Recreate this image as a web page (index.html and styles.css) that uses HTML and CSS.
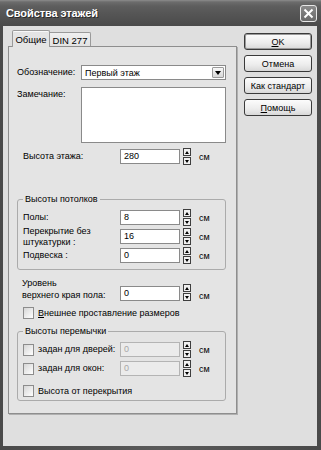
FILE: index.html
```html
<!DOCTYPE html>
<html lang="ru">
<head>
<meta charset="utf-8">
<title>Свойства этажей</title>
<link rel="stylesheet" href="styles.css">
</head>
<body>
<div class="window">
  <div class="titlebar">
    <span class="title">Свойства этажей</span>
    <span class="close">
      <svg width="11" height="11" viewBox="0 0 11 11"><path d="M1.5 1.5 L9.5 9.5 M9.5 1.5 L1.5 9.5" stroke="#fff" stroke-width="2" fill="none"/></svg>
    </span>
  </div>
  <div class="client">
    <div class="tabarea">
      <div class="tabs">
        <div class="tab active">Общие</div>
        <div class="tab">DIN 277</div>
      </div>
      <div class="panel">
        <div class="row row-select">
          <span class="lbl lbl-short">Обозначение:</span>
          <div class="combo"><span class="combo-text">Первый этаж</span><span class="combo-btn"><i class="tri-down"></i></span></div>
        </div>
        <div class="row row-note">
          <span class="lbl lbl-short lbl-note">Замечание:</span>
          <div class="memo"></div>
        </div>
        <div class="row num-row row-height">
          <span class="lbl lbl-num">Высота этажа:</span>
          <div class="edit">280</div>
          <div class="spin"><span class="spin-btn"><i class="tri-up"></i></span><span class="spin-btn"><i class="tri-down"></i></span></div>
          <span class="unit">см</span>
        </div>

        <fieldset class="group group-ceil">
          <legend>Высоты потолков</legend>
          <div class="row num-row">
            <span class="lbl lbl-num">Полы:</span>
            <div class="edit">8</div>
            <div class="spin"><span class="spin-btn"><i class="tri-up"></i></span><span class="spin-btn"><i class="tri-down"></i></span></div>
            <span class="unit">см</span>
          </div>
          <div class="row num-row">
            <span class="lbl lbl-num lbl-two">Перекрытие без<br>штукатурки :</span>
            <div class="edit">16</div>
            <div class="spin"><span class="spin-btn"><i class="tri-up"></i></span><span class="spin-btn"><i class="tri-down"></i></span></div>
            <span class="unit">см</span>
          </div>
          <div class="row num-row">
            <span class="lbl lbl-num">Подвеска :</span>
            <div class="edit">0</div>
            <div class="spin"><span class="spin-btn"><i class="tri-up"></i></span><span class="spin-btn"><i class="tri-down"></i></span></div>
            <span class="unit">см</span>
          </div>
        </fieldset>

        <div class="row num-row row-level">
          <span class="lbl lbl-num lbl-two2">Уровень<br>верхнего края пола:</span>
          <div class="edit">0</div>
          <div class="spin"><span class="spin-btn"><i class="tri-up"></i></span><span class="spin-btn"><i class="tri-down"></i></span></div>
          <span class="unit">см</span>
        </div>

        <div class="row check-row row-ext">
          <span class="check"></span>
          <span class="check-lbl"><u>В</u>нешнее проставление размеров</span>
        </div>

        <fieldset class="group group-lintel">
          <legend>Высоты перемычки</legend>
          <div class="row num-row">
            <span class="lbl lbl-check">
              <span class="check"></span>
              <span class="check-lbl">задан для дверей:</span>
            </span>
            <div class="edit disabled">0</div>
            <div class="spin"><span class="spin-btn"><i class="tri-up"></i></span><span class="spin-btn"><i class="tri-down"></i></span></div>
            <span class="unit">см</span>
          </div>
          <div class="row num-row">
            <span class="lbl lbl-check">
              <span class="check"></span>
              <span class="check-lbl">задан для окон:</span>
            </span>
            <div class="edit disabled">0</div>
            <div class="spin"><span class="spin-btn"><i class="tri-up"></i></span><span class="spin-btn"><i class="tri-down"></i></span></div>
            <span class="unit">см</span>
          </div>
          <div class="row check-row row-from">
            <span class="check"></span>
            <span class="check-lbl">Высота от перекрытия</span>
          </div>
        </fieldset>
      </div>
    </div>
    <div class="buttons">
      <div class="btn btn-default"><u>O</u>K</div>
      <div class="btn">Отмена</div>
      <div class="btn">Как стандарт</div>
      <div class="btn"><u>П</u>омощь</div>
    </div>
  </div>
</div>
</body>
</html>
```

FILE: styles.css
```css
* { box-sizing: border-box; }
html, body { margin: 0; padding: 0; }
body {
  width: 321px;
  height: 450px;
  overflow: hidden;
  font-family: "Liberation Sans", Arial, sans-serif;
  font-size: 9px;
  color: #000;
  background: #fff;
}

.window {
  width: 321px;
  height: 450px;
  display: flex;
  flex-direction: column;
  background: linear-gradient(90deg, #4a4a4a, #5a5a5a 50%, #4a4a4a);
}

.titlebar {
  height: 26px;
  flex: none;
  display: flex;
  align-items: center;
  justify-content: space-between;
  padding: 0 4px 0 6px;
  background: linear-gradient(180deg, #8c8c8c 0, #6c6c6c 2px, #5e5e5e 6px, #555 14px, #4e4e4e 22px, #4a4a4a 100%);
}
.title {
  color: #fff;
  font-weight: bold;
  font-size: 11px;
  letter-spacing: -0.1px;
  text-shadow: 1px 1px 0 #2a2a2a;
}
.close {
  width: 17px;
  height: 17px;
  display: flex;
  align-items: center;
  justify-content: center;
  border: 1px solid #e8e8e8;
  border-radius: 3px;
  background: linear-gradient(180deg, #8a8a8a, #6a6a6a);
}

.client {
  flex: 1;
  margin: 0 4px 4px 3px;
  background: #dfdfdf;
  display: flex;
  padding: 4px 0 0 5px;
}

.tabarea {
  width: 229px;
  display: flex;
  flex-direction: column;
}
.tabs {
  display: flex;
  align-items: flex-end;
  padding-left: 4px;
  height: 16px;
  position: relative;
  z-index: 1;
}
.tab {
  height: 14px;
  width: 41px;
  font-size: 9.5px;
  border: 1px solid #9a9a9a;
  border-bottom: none;
  border-left: none;
  border-radius: 0 2px 0 0;
  background: linear-gradient(180deg, #f0f0f0, #e2e2e2);
  display: flex;
  align-items: center;
  justify-content: center;
  padding-top: 1px;
}
.tab.active {
  height: 17px;
  width: 38px;
  margin-bottom: -1px;
  border-left: 1px solid #9a9a9a;
  border-top: 1px solid #9a9a9a;
  box-shadow: inset 0 1px 0 #f8f8f8;
  border-radius: 2px 2px 0 0;
  background: #e4e4e4;
  padding-top: 0;
}

.panel {
  width: 229px;
  height: 368px;
  border: 1px solid #8e8e8e;
  box-shadow: 1px 1px 0 #b0b0b0;
  background: #e4e4e4;
  padding: 18px 10px 0 8px;
  display: flex;
  flex-direction: column;
}

.row { display: flex; align-items: center; }
.lbl { flex: none; white-space: nowrap; line-height: 11px; }
.lbl-short { width: 64px; }

.row-select { height: 15px; }
.combo {
  width: 146px;
  height: 15px;
  border: 1px solid #8a8a8a;
  background: #fff;
  display: flex;
  align-items: center;
  justify-content: space-between;
  padding: 0 1px 0 3px;
}
.combo-btn {
  width: 12px;
  height: 11px;
  border: 1px solid #9a9a9a;
  border-radius: 1px;
  background: linear-gradient(180deg, #f8f8f8, #d8d8d8);
  display: flex;
  align-items: center;
  justify-content: center;
}

.row-note { margin-top: 7px; align-items: flex-start; }
.lbl-note { padding-top: 2px; }
.memo {
  width: 146px;
  height: 56px;
  border: 1px solid #8a8a8a;
  background: #fff;
}

.num-row { height: 17px; }
.lbl-num { width: 97px; }
.row-height { margin-top: 5px; padding-left: 6px; }
.edit {
  flex: none;
  width: 60px;
  height: 15px;
  border: 1px solid #8a8a8a;
  background: #fff;
  padding-left: 3px;
  line-height: 13px;
}
.edit.disabled { background: #ebebeb; color: #a8a8a8; border-color: #b4b4b4; }
.spin {
  flex: none;
  margin-left: 3px;
  width: 8px;
  height: 17px;
  display: flex;
  flex-direction: column;
  justify-content: space-between;
}
.spin-btn {
  height: 8px;
  border: 1px solid #3e3e3e;
  background: #f0f0f0;
  display: flex;
  align-items: center;
  justify-content: center;
}
.unit { margin-left: 8px; }

i { display: block; width: 0; height: 0; }
.tri-down { border-left: 2.5px solid transparent; border-right: 2.5px solid transparent; border-top: 3px solid #000; }
.tri-up { border-left: 2.5px solid transparent; border-right: 2.5px solid transparent; border-bottom: 3px solid #000; }
.combo-btn .tri-down { border-left-width: 3.5px; border-right-width: 3.5px; border-top-width: 4px; }

.group {
  margin: 29px 0 0 0;
  width: 209px;
  border: 1px solid #ababab;
  border-radius: 3px;
  padding: 4px 2px 5px 5px;
  min-width: 0;
}
.group legend {
  padding: 0 2px;
  margin-left: 0;
  line-height: 11px;
}
.group .num-row + .num-row { margin-top: 2px; }
.lbl-two { line-height: 11px; }

.row-level { margin-top: 7px; padding-left: 5px; height: 24px; align-items: flex-end; }
.row-level .lbl { width: 98px; line-height: 12px; }

.check {
  flex: none;
  display: block;
  width: 11px;
  height: 12px;
  border: 1px solid #8c8c8c;
  background: linear-gradient(135deg, #d6d6d6, #ffffff);
}
.check-lbl { margin-left: 4px; white-space: nowrap; }
.row-ext { margin-top: 6px; padding-left: 6px; height: 12px; }

.group-lintel { margin-top: 7px; padding-bottom: 3px; }
.lbl-check { display: flex; align-items: center; width: 97px; }
.row-from { margin-top: 8px; height: 12px; }

.buttons {
  margin-left: 7px;
  padding-top: 3px;
  display: flex;
  flex-direction: column;
  gap: 5px;
}
.btn {
  width: 68px;
  height: 17px;
  border: 1px solid #3a3a3a;
  border-radius: 3px;
  background: linear-gradient(180deg, #fcfcfc, #ececec 60%, #d8d8d8);
  display: flex;
  align-items: center;
  justify-content: center;
  white-space: nowrap;
}
.btn-default {
  box-shadow: inset 0 0 0 1px #9a9a9a;
}
```
